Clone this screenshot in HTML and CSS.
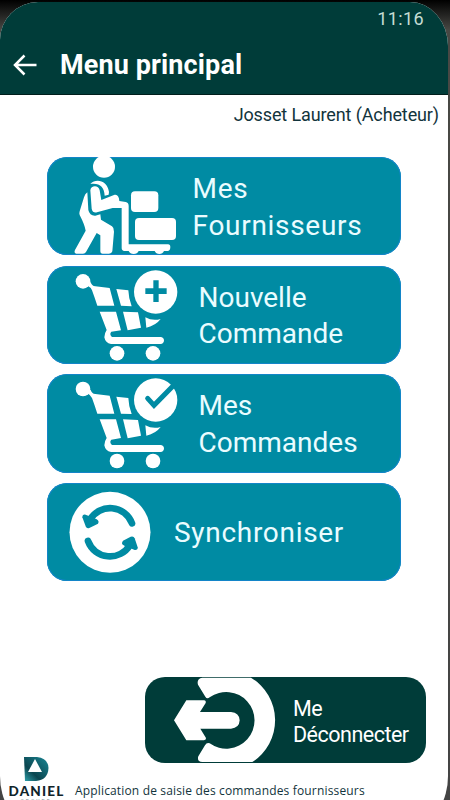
FILE: index.html
```html
<!DOCTYPE html>
<html lang="fr">
<head>
    <meta charset="UTF-8">
    <meta name="viewport" content="width=device-width, initial-scale=1.0">
    <title>Menu principal</title>

    <link rel="stylesheet" href="styles.css">
</head>
<body>
    <div class="screen">
        <header class="header">
            <div class="status">11:16</div>
            <div class="toolbar">
                <svg class="back" viewBox="0 0 24 22">
                    <path d="M11.5 1.5L2 11L11.5 20.5M2 11H23.5"/>
                </svg>
                <h1 class="title">Menu principal</h1>
            </div>
        </header>

        <p class="user">Josset Laurent (Acheteur)</p>

        <nav class="menu">
            <a class="card suppliers">
                <svg class="card_icon" viewBox="21 21 420 294">
                    <circle cx="192" cy="50" r="33"/>
                    <path d="M151 102C168 84 202 91 207 126L206 134L194 137C193 110 178 98 151 102Z"/>
                    <path d="M151 121C152 106 176 104 179 121L184 150L222 135C232 132 237 139 238 153L257 156Q266 158 266 168V283H384Q391 283 391 291Q391 302 384 303H372Q368 312 358 312Q348 312 344 303H296Q292 312 281 312Q270 312 266 303H253Q245 302 245 294V174H218L171 187Q158 190 155 176Z"/>
                    <path d="M142 127L145 180Q149 198 166 197L181 193L183 209L216 229Q223 234 222 245L217 304Q215 311 207 311H188Q181 311 181 303V256L170 249L138 306Q135 311 129 311H109Q101 309 105 300L137 242Q134 224 119 195Q117 190 119 184L132 142Q135 131 142 127Z"/>
                    <rect x="273" y="124" width="82" height="62" rx="12"/>
                    <rect x="285" y="204" width="123" height="66" rx="12"/>
                </svg>
                <span>Mes<br>Fournisseurs</span>
            </a>
            <a class="card order">
                <svg class="card_icon" viewBox="21 15 420 294">
                    <circle cx="129" cy="61" r="22"/>
                    <path d="M141 73L152 63Q155 75 166 76L209 81L223 134H172Q165 113 156 88Q152 79 141 73Z"/>
                    <path d="M229 84L265 88Q266 113 275 136L243 134Z"/>
                    <path d="M179 152H228L243 208L214 212Q207 219 216 228H363Q372 230 372 239Q371 248 362 249H213Q196 246 193 229Q193 217 200 207Z"/>
                    <path d="M249 152L294 154L303 200L263 208Z"/>
                    <path d="M316 169Q338 181 362 174Q348 193 319 200Z"/>
                    <circle cx="231" cy="277" r="22"/>
                    <circle cx="339" cy="277" r="22"/>
                    <circle cx="347" cy="93" r="65"/>
                    <path class="mark" d="M340 58H356V82H380V99H356V123H340V99H316V82H340Z"/>
                </svg>
                <span>Nouvelle<br>Commande</span>
            </a>
            <a class="card order">
                <svg class="card_icon" viewBox="21 11 420 294">
                    <circle cx="129" cy="56" r="22"/>
                    <path d="M141 68L152 58Q155 70 166 71L209 76L223 130H172Q165 108 156 83Q152 74 141 68Z"/>
                    <path d="M229 79L265 83Q266 108 275 131L243 130Z"/>
                    <path d="M179 147H228L243 203L214 208Q207 215 216 224H363Q372 226 372 235Q371 244 362 245H213Q196 242 193 225Q193 213 200 203Z"/>
                    <path d="M249 147L294 149L303 196L263 204Z"/>
                    <path d="M316 165Q338 177 362 170Q348 189 319 196Z"/>
                    <circle cx="231" cy="272" r="22"/>
                    <circle cx="339" cy="272" r="22"/>
                    <circle cx="347" cy="89" r="65"/>
                    <path class="tick" d="M323 84L342 105L410 36"/>
                </svg>
                <span>Mes<br>Commandes</span>
            </a>
            <a class="card sync">
                <svg class="card_icon" viewBox="21 14 420 294">
                    <circle cx="210" cy="162" r="121.500"/>
                    <path class="loop" d="M276 135A70 70 0 0 0 150 124M144 188A70 70 0 0 0 270 200"/>
                    <path class="mark" d="M127 117Q127 107 137 109L170 123Q179 128 174 136L148 149Q140 152 137 144Z"/>
                    <path class="mark" d="M293 207Q294 216 284 215L251 201Q242 196 249 187L272 175Q281 172 284 180Z"/>
                </svg>
                <span>Synchroniser</span>
            </a>
        </nav>

        <a class="logout">
            <svg class="logout_icon" viewBox="15 21 420 258">
                <path d="M187 23H333A149 149 0 0 1 337 276H187Q170 274 175 259L195 226Q200 217 209 220A85 85 0 1 0 209 82Q201 88 196 80L174 44Q169 26 187 23Z"/>
                <path d="M139 91H192Q199 92 197 99L180 126H273Q298 128 299 151Q298 174 273 176H181L198 204Q199 210 192 211H139L102 151Z"/>
            </svg>
            <span>Me<br>Déconnecter</span>
        </a>

        <footer class="footer">
            <div class="brand">
                <svg class="brand_logo" viewBox="0 0 25 24">
                    <defs>
                        <linearGradient id="teal" x1="0" y1="1" x2="1" y2="0">
                            <stop offset="0" stop-color="#2fa3ad"/>
                            <stop offset=".35" stop-color="#0b4650"/>
                            <stop offset="1" stop-color="#1a8795"/>
                        </linearGradient>
                    </defs>
                    <path fill="url(#teal)" d="M0 0H13Q24 1 24.500 11Q24 23 12 24H1Z"/>
                    <path fill="#fff" d="M11 2L18 15H4Z"/>
                </svg>
                <b class="brand_name">DANIEL</b>
                <span class="brand_sub">GROUPE</span>
            </div>
            <p class="about">Application de saisie des commandes fournisseurs</p>
        </footer>
    </div>
</body>
</html>
```
FILE: styles.css
```css
body
{
    margin: 0px;
    height: 800px;
    overflow: hidden;
    background: linear-gradient(#000000 0px, #484844 30px, #444444 100%);
    font-family: Roboto, "Liberation Sans", sans-serif;
}

.screen
{
    display: flex;
    flex-direction: column;
    width: 448px;
    height: 820px;
    margin-top: 2px;
    background-color: #ffffff;
    border-radius: 38px 38px 30px 30px / 38px 44px 46px 46px;
    overflow: hidden;
}

.header
{
    height: 92px;
    flex: none;
    background-color: #003c39;
    border-bottom: 1px solid #001e1c;
    color: #ffffff;
}

.status
{
    height: 34px;
    padding-right: 24px;
    text-align: right;
    font-size: 18px;
    line-height: 34px;
    letter-spacing: 0.4px;
    color: #c5dcd4;
}

.toolbar
{
    display: flex;
    align-items: center;
    height: 58px;
    padding-left: 13px;
}

.back
{
    width: 24px;
    height: 22px;
    margin-right: 23px;
    fill: none;
    stroke: #ffffff;
    stroke-width: 2.5;
}

.title
{
    margin: 0px;
    font-size: 27px;
    font-weight: 700;
    letter-spacing: 0.12px;
}

.user
{
    margin: 0px;
    padding: 9px 9px 0px 0px;
    height: 53px;
    text-align: right;
    font-size: 18px;
    line-height: 22px;
    letter-spacing: -0.12px;
    color: #12343c;
}

.menu
{
    display: flex;
    flex-direction: column;
    gap: 10.5px;
    margin-left: 47px;
}

.card
{
    display: flex;
    align-items: center;
    width: 354px;
    height: 98.2px;
    border-radius: 20px;
    background-color: #008ba3;
    box-shadow: inset 0px 0px 0px 1px #1385c8;
    color: #eafcff;
    font-size: 28px;
    line-height: 36.5px;
    letter-spacing: 0.7px;
    overflow: hidden;
}

.card span
{
    padding-top: 3px;
}

.card_icon
{
    flex: none;
    width: 140px;
    height: 98px;
    fill: #ffffff;
}

.card .mark
{
    fill: #008ba3;
}

.tick
{
    fill: none;
    stroke: #008ba3;
    stroke-width: 15;
    stroke-linecap: round;
}

.loop
{
    fill: none;
    stroke: #008ba3;
    stroke-width: 20;
    stroke-linecap: round;
}

.suppliers span
{
    margin-left: 5.5px;
}

.order span
{
    margin-left: 11.5px;
    letter-spacing: 0px;
}

.sync span
{
    margin-left: -13px;
}

.logout
{
    display: flex;
    align-items: center;
    width: 281px;
    height: 86px;
    margin: 96px 0px 0px 145px;
    border-radius: 20px;
    background-color: #003c39;
    color: #ffffff;
    font-size: 21.5px;
    line-height: 26px;
    letter-spacing: -0.5px;
    overflow: hidden;
}

.logout span
{
    padding-top: 3px;
}

.logout_icon
{
    flex: none;
    width: 140px;
    height: 86px;
    margin-right: 8px;
    fill: #ffffff;
}

.footer
{
    display: flex;
    margin-top: -6px;
    color: #12343c;
}

.brand
{
    display: flex;
    flex-direction: column;
    align-items: center;
    width: 54px;
    margin-left: 9px;
}

.brand_logo
{
    width: 25px;
    height: 24px;
}

.brand_name
{
    margin-top: 3px;
    font-family: Lato, sans-serif;
    font-weight: 900;
    font-size: 13.5px;
    line-height: 14px;
    letter-spacing: 1.2px;
    margin-right: -1px;
    color: #10242a;
}

.brand_sub
{
    margin-top: 1px;
    font-size: 5px;
    line-height: 5px;
    letter-spacing: 2px;
    color: #7c8d90;
}

.about
{
    margin: 26px 0px 0px 12px;
    font-family: "Open Sans", sans-serif;
    font-size: 12px;
    font-weight: 500;
    line-height: 16px;
    letter-spacing: 0.16px;
    white-space: nowrap;
}
```
